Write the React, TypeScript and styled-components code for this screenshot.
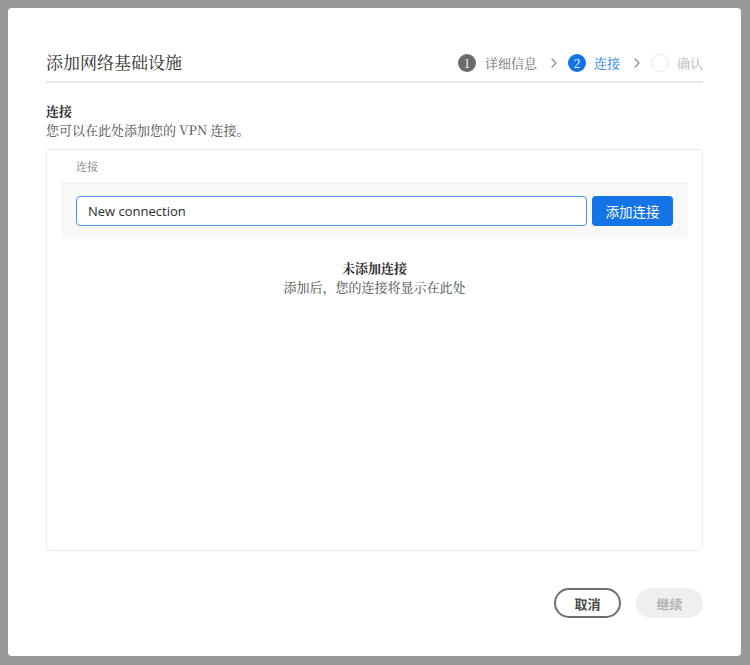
import React from "react";
import styled, { createGlobalStyle } from "styled-components";

const Global = createGlobalStyle`
  html, body { margin: 0; padding: 0; background: #989898; }
  body { width: 750px; height: 665px; overflow: hidden; }
  * { box-sizing: border-box; }
`;

const SERIF = `"Noto Serif CJK SC", "Liberation Serif", "Noto Sans CJK SC", serif`;
const SANS = `"Open Sans", "Noto Sans CJK SC", sans-serif`;

const Page = styled.div`
  padding: 8px 9px 9px 8px;
  width: 750px;
  height: 665px;
`;

const Dialog = styled.div`
  width: 733px;
  height: 648px;
  background: #fff;
  border-radius: 4px;
  padding: 40px 38px 0 38px;
  display: flex;
  flex-direction: column;
  font-family: ${SERIF};
  color: #2c2c2c;
`;

const Header = styled.div`
  display: flex;
  align-items: center;
  justify-content: space-between;
  height: 28px;
`;

const Title = styled.h1`
  margin: 0;
  font-size: 17px;
  font-weight: 400;
  line-height: 28px;
  color: #2c2c2c;
`;

const Stepper = styled.div`
  display: flex;
  align-items: center;
  margin-top: 1px;
`;

type State = "done" | "active" | "todo";

const Step = styled.div<{ $state: State }>`
  display: flex;
  align-items: center;
  gap: ${(p) => (p.$state === "done" ? "9px" : "8px")};
  font-size: 13px;
  line-height: 18px;
  color: ${(p) =>
    p.$state === "active" ? "#1473e6" : p.$state === "done" ? "#6e6e6e" : "#b8b8b8"};
`;

const Circle = styled.span<{ $state: State }>`
  width: 18px;
  height: 18px;
  border-radius: 50%;
  display: flex;
  align-items: center;
  justify-content: center;
  font-size: 12px;
  color: #fff;
  background: ${(p) =>
    p.$state === "active" ? "#1473e6" : p.$state === "done" ? "#6b6b6b" : "transparent"};
  border: ${(p) => (p.$state === "todo" ? "1.5px solid #e3e3e3" : "none")};
`;

const Chevron = styled.span`
  display: flex;
  margin: 0 11px 0 14px;
`;

const Divider = styled.div`
  height: 2px;
  background: #e6e6e6;
  margin-top: 5px;
`;

const SectionTitle = styled.div`
  margin-top: 18px;
  font-size: 13px;
  font-weight: 700;
  line-height: 19px;
  color: #2c2c2c;
`;

const SectionDesc = styled.div`
  font-size: 13px;
  line-height: 19px;
  color: #4b4b4b;
`;

const Card = styled.div`
  margin-top: 10px;
  height: 402px;
  border: 1px solid #eaeaea;
  border-radius: 4px;
  padding: 8px 14px 0 14px;
  display: flex;
  flex-direction: column;
`;

const CardLabel = styled.div`
  padding-left: 15px;
  font-size: 11px;
  line-height: 16px;
  color: #6e6e6e;
`;

const AddRow = styled.div`
  margin-top: 8px;
  background: #f8f8f8;
  border-top: 1px solid #f0f0f0;
  padding: 13px 15px 13px 15px;
  display: flex;
  gap: 5px;
`;

const Input = styled.input`
  flex: 1;
  height: 30px;
  border: 1px solid #4b93ec;
  border-radius: 4px;
  padding: 0 11px;
  font-family: ${SANS};
  font-size: 13px;
  color: #2c2c2c;
  background: #fff;
  outline: none;
`;

const PrimaryButton = styled.button`
  width: 81px;
  height: 30px;
  border: none;
  border-radius: 4px;
  background: #1473e6;
  color: #fff;
  font-family: ${SANS};
  font-size: 13.5px;
  padding: 0;
`;

const Empty = styled.div`
  margin-top: 19px;
  text-align: center;
  font-size: 13px;
  line-height: 19px;
`;

const EmptyTitle = styled.div`
  font-weight: 700;
  color: #2c2c2c;
`;

const EmptyDesc = styled.div`
  color: #4b4b4b;
`;

const Footer = styled.div`
  margin-top: 37px;
  display: flex;
  justify-content: flex-end;
  gap: 15px;
`;

const PillButton = styled.button<{ $disabled?: boolean }>`
  width: 67px;
  height: 30px;
  border-radius: 15px;
  font-family: ${SANS};
  font-weight: 700;
  font-size: 13px;
  padding: 0;
  border: ${(p) => (p.$disabled ? "none" : "2px solid #6e6e6e")};
  background: ${(p) => (p.$disabled ? "#efefef" : "#fff")};
  color: ${(p) => (p.$disabled ? "#b3b3b3" : "#4b4b4b")};
`;

const ChevronIcon = () => (
  <Chevron>
    <svg width="6" height="10" viewBox="0 0 6 10">
      <path d="M1 1 L5 5 L1 9" fill="none" stroke="#8e8e8e" strokeWidth="1.3" strokeLinecap="round" strokeLinejoin="round" />
    </svg>
  </Chevron>
);

export default function App() {
  return (
    <Page>
      <Global />
      <Dialog>
        <Header>
          <Title>添加网络基础设施</Title>
          <Stepper>
            <Step $state="done">
              <Circle $state="done">1</Circle>
              详细信息
            </Step>
            <ChevronIcon />
            <Step $state="active">
              <Circle $state="active">2</Circle>
              连接
            </Step>
            <ChevronIcon />
            <Step $state="todo">
              <Circle $state="todo" />
              确认
            </Step>
          </Stepper>
        </Header>
        <Divider />
        <SectionTitle>连接</SectionTitle>
        <SectionDesc>您可以在此处添加您的 VPN 连接。</SectionDesc>
        <Card>
          <CardLabel>连接</CardLabel>
          <AddRow>
            <Input defaultValue="New connection" />
            <PrimaryButton>添加连接</PrimaryButton>
          </AddRow>
          <Empty>
            <EmptyTitle>未添加连接</EmptyTitle>
            <EmptyDesc>添加后，您的连接将显示在此处</EmptyDesc>
          </Empty>
        </Card>
        <Footer>
          <PillButton>取消</PillButton>
          <PillButton $disabled>继续</PillButton>
        </Footer>
      </Dialog>
    </Page>
  );
}
